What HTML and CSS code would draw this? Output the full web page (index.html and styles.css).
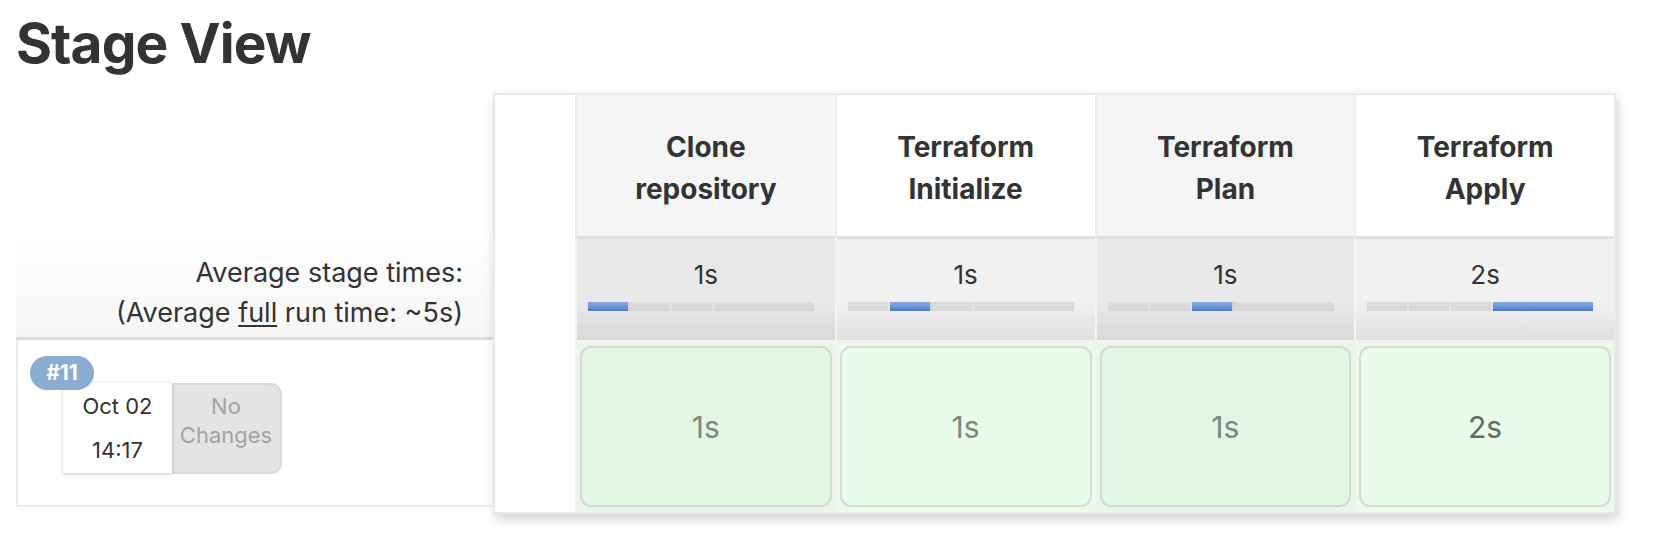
FILE: index.html
```html
<!DOCTYPE html>
<html>
<head>
<meta charset="utf-8">
<link rel="stylesheet" href="styles.css">
</head>
<body>
<div class="page">
  <h1 class="title">Stage View</h1>
  <div class="stage-view">
    <div class="left-col">
      <div class="left-spacer"></div>
      <div class="avg-label">
        <div>Average stage times:</div>
        <div>(Average <u>full</u> run time: ~5s)</div>
      </div>
      <div class="build-row">
        <span class="badge">#11</span>
        <div class="build-info">
          <div class="build-date"><div>Oct 02</div><div>14:17</div></div>
          <div class="build-changes">No<br>Changes</div>
        </div>
      </div>
    </div>
    <div class="stage-table">
      <div class="blank-col"></div>

      <div class="head odd">Clone<br>repository</div>
      <div class="head even">Terraform<br>Initialize</div>
      <div class="head odd">Terraform<br>Plan</div>
      <div class="head even">Terraform<br>Apply</div>

      <div class="avg odd">
        <div class="avg-time">1s</div>
        <div class="bar"><span class="seg s1 on"></span><span class="seg s1"></span><span class="seg s1"></span><span class="seg s2"></span></div>
      </div>
      <div class="avg even">
        <div class="avg-time">1s</div>
        <div class="bar"><span class="seg s1"></span><span class="seg s1 on"></span><span class="seg s1"></span><span class="seg s2"></span></div>
      </div>
      <div class="avg odd">
        <div class="avg-time">1s</div>
        <div class="bar"><span class="seg s1"></span><span class="seg s1"></span><span class="seg s1 on"></span><span class="seg s2"></span></div>
      </div>
      <div class="avg even">
        <div class="avg-time">2s</div>
        <div class="bar"><span class="seg s1"></span><span class="seg s1"></span><span class="seg s1"></span><span class="seg s2 on"></span></div>
      </div>

      <div class="body odd"><div class="box">1s</div></div>
      <div class="body even"><div class="box">1s</div></div>
      <div class="body odd"><div class="box">1s</div></div>
      <div class="body even"><div class="box dark">2s</div></div>
    </div>
  </div>
</div>
</body>
</html>
```
FILE: styles.css
```css
* { box-sizing: border-box; }
html, body { margin: 0; padding: 0; background: #fff; }
body {
  font-family: Inter, "Noto Sans", "Liberation Sans", sans-serif;
  color: #333;
  width: 1656px;
  height: 534px;
  overflow: hidden;
}
.page { padding: 0 16px; }
.title {
  margin: 10px 0 0;
  font-size: 55px;
  line-height: 67px;
  font-weight: 700;
  color: #333;
  letter-spacing: -0.9px;
}
.stage-view {
  display: flex;
  align-items: flex-start;
  margin-top: 16px;
}
.left-col { width: 477px; flex: none; }
.left-spacer { height: 143px; }
.avg-label {
  height: 104px;
  padding: 17px 30px 0 0;
  text-align: right;
  font-size: 27px;
  line-height: 40px;
  color: #333;
  background: linear-gradient(to bottom, #fefefe, #f6f6f6);
  border-bottom: 3px solid #dcdcdc;
}
.avg-label u { text-underline-offset: 3px; text-decoration-thickness: 2px; }
.build-row {
  position: relative;
  height: 167px;
  border: 2px solid #ebebeb;
  border-top: none;
  border-right: none;
  padding: 43px 0 0 45px;
}
.badge {
  position: absolute;
  left: 12px;
  top: 16px;
  z-index: 2;
  width: 64px;
  height: 34px;
  border-radius: 17px;
  background: #89acd1;
  color: #fff;
  font-weight: 700;
  font-size: 21px;
  line-height: 34px;
  text-align: center;
}
.build-info { display: flex; }
.build-date {
  width: 109px;
  height: 90px;
  padding-top: 1px;
  background: #fff;
  text-align: center;
  font-size: 22px;
  line-height: 44px;
  color: #333;
  box-shadow: 0 1px 4px rgba(0,0,0,0.22);
  position: relative;
  z-index: 1;
}
.build-changes {
  width: 110px;
  height: 91px;
  padding-top: 7px;
  background: #e4e4e4;
  border: 2px solid #d9d9d9;
  border-left: none;
  border-radius: 0 11px 11px 0;
  text-align: center;
  font-size: 22px;
  line-height: 29px;
  color: #a3a3a3;
}
.stage-table {
  flex: none;
  width: 1123px;
  display: grid;
  grid-template-columns: 80px repeat(4, 1fr);
  grid-template-rows: 141px 104px 172px;
  border: 2px solid #e5eaee;
  background: #fff;
  box-shadow: 2px 5px 10px rgba(0,0,0,0.18);
}
.blank-col { grid-row: 1 / 4; grid-column: 1; background: #fff; }
.head {
  display: flex;
  align-items: center;
  justify-content: center;
  text-align: center;
  font-weight: 700;
  font-size: 28px;
  line-height: 42px;
  color: #333;
  border-left: 2px solid #eeeeee;
  padding-top: 4px;
}
.head.odd { background: #f5f5f5; }
.head.even { background: #fff; }
.avg {
  border-top: 3px solid #e0e0e0;
  border-left: 2px solid #f4f4f4;
  padding-top: 18px;
}
.avg.odd { background: linear-gradient(to bottom, #e9e9e9 0%, #e9e9e9 62%, #d9d9d9 100%); }
.avg.even { background: linear-gradient(to bottom, #f1f1f1 0%, #f1f1f1 62%, #e0e0e0 100%); }
.avg-time {
  text-align: center;
  font-size: 26px;
  line-height: 36px;
  color: #333;
}
.bar {
  display: flex;
  width: 226px;
  height: 9px;
  margin: 9px 0 0 11px;
  background: #d9d9d9;
}
.seg {
  height: 9px;
  background: linear-gradient(to bottom, #dddddd, #d6d6d6);
  border-right: 2px solid #e4e4e4;
}
.seg:last-child { border-right: none; }
.s1 { width: 42px; }
.s2 { flex: 1; }
.seg.on {
  background: linear-gradient(to bottom, #86abe0 0%, #6a97d7 55%, #4b79c3 100%);
  border-right-color: #d0d0d0;
}
.body {
  border-left: 2px solid #f1f3f1;
  border-top: 3px solid #f1f3f1;
  padding: 3px 3px 5px;
}
.body.odd { background: #eaf4ea; }
.body.even { background: #eef9ee; }
.box {
  height: 100%;
  display: flex;
  align-items: center;
  justify-content: center;
  border: 2px solid #d5dad5;
  border-radius: 11px;
  font-size: 30px;
  color: #7d887d;
}
.body.odd .box { background: #e1f6e3; }
.body.even .box { background: #e8fde9; }
.box.dark { color: #626a62; }
```
